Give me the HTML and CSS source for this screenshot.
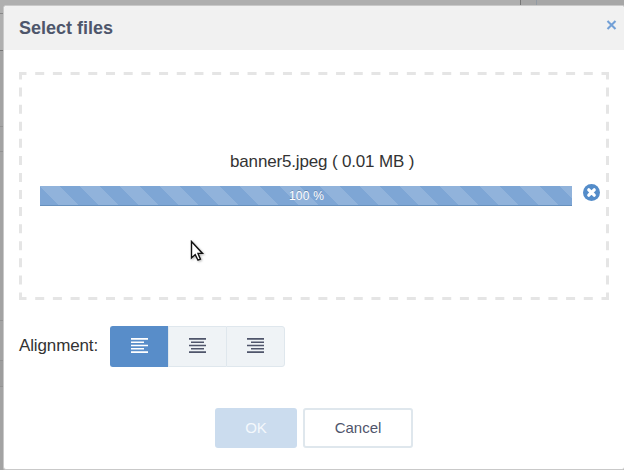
FILE: index.html
```html
<!DOCTYPE html>
<html lang="en">
<head>
<meta charset="utf-8">
<title>Select files</title>
<link rel="stylesheet" href="styles.css">
</head>
<body>
<div class="modal">
  <header class="modal-header">
    <h1>Select files</h1>
    <svg class="close" width="11" height="10" viewBox="0 0 11 10"><path d="M1.5 1 9.5 9M9.5 1 1.5 9"/></svg>
  </header>
  <main class="modal-body">
    <section class="dropzone">
      <svg class="dashes" width="590" height="228" viewBox="0 0 590 228">
        <g stroke-dasharray="9 8.697" stroke-dashoffset="4.5"><path d="M3 1.5H587"/><path d="M3 226.5H587"/></g>
        <g stroke-dasharray="9 8.077" stroke-dashoffset="4.5"><path d="M1.5 3V225"/><path d="M588.5 3V225"/></g>
        <path d="M0 1.5H3M587 1.5H590M0 226.5H3M587 226.5H590"/>
      </svg>
      <p class="filename">banner5.jpeg ( 0.01 MB )</p>
      <div class="upload">
        <div class="progress"><span>100 %</span></div>
        <svg class="remove" width="17" height="17" viewBox="0 0 17 17"><circle cx="8.5" cy="8.5" r="8.5"/><path d="M5.8 5.8 11.2 11.2M11.2 5.8 5.8 11.2"/></svg>
      </div>
    </section>
    <div class="alignment">
      <span class="label">Alignment:</span>
      <div class="group">
        <button class="active" aria-label="Left"><svg width="17" height="15" viewBox="0 0 17 15"><path d="M0 .9H17M0 4.2H13M0 7.5H17M0 10.8H13M0 14.1H17"/></svg></button>
        <button aria-label="Center"><svg width="17" height="15" viewBox="0 0 17 15"><path d="M0 .9H17M2 4.2H15M0 7.5H17M2 10.8H15M0 14.1H17"/></svg></button>
        <button aria-label="Right"><svg width="17" height="15" viewBox="0 0 17 15"><path d="M0 .9H17M4 4.2H17M0 7.5H17M4 10.8H17M0 14.1H17"/></svg></button>
      </div>
    </div>
  </main>
  <footer class="modal-footer">
    <button class="ok">OK</button>
    <button class="cancel">Cancel</button>
  </footer>
</div>
<svg class="cursor" width="16" height="24" viewBox="0 0 16 24"><path d="M1.5 1.5V18L5.2 14.6 8 20.2 10.4 19.2 8 13.4H12.5Z"/></svg>
</body>
</html>
```
FILE: styles.css
```css
* { box-sizing: border-box; }
body {
  margin: 0;
  width: 624px;
  height: 470px;
  padding: 5px 0 0 3px;
  overflow: hidden;
  font-family: "Liberation Sans", Arial, sans-serif;
  color: #333;
  background:
    linear-gradient(#777, #777) 520px 0 / 1px 5px no-repeat,
    linear-gradient(#929ba4, #929ba4) 536px 0 / 1px 5px no-repeat,
    linear-gradient(#a7a7a7, #a7a7a7) 521px 0 / 103px 5px no-repeat,
    linear-gradient(#888, #888) 0 13px / 3px 1px no-repeat,
    linear-gradient(#777, #777) 0 50px / 3px 1px no-repeat,
    linear-gradient(#929292, #929292) 0 126px / 3px 1px no-repeat,
    linear-gradient(#929292, #929292) 0 151px / 3px 1px no-repeat,
    linear-gradient(#929292, #929292) 0 320px / 3px 1px no-repeat,
    linear-gradient(#929292, #929292) 0 360px / 3px 1px no-repeat,
    linear-gradient(#929292, #929292) 0 386px / 3px 1px no-repeat,
    linear-gradient(#9d9d9d, #9d9d9d) 0 361px / 3px 25px no-repeat,
    linear-gradient(#a3a3a3, #a3a3a3) 0 51px / 3px 419px no-repeat,
    #afafaf;
}
.modal {
  width: 622px;
  height: 465px;
  border: 1px solid #c9c9c9;
  border-radius: 3px;
  background: #fff;
  display: flex;
  flex-direction: column;
}
.modal-header {
  height: 44px;
  padding: 0 7px 0 15px;
  display: flex;
  justify-content: space-between;
  align-items: center;
  background: #f1f1f1;
  border-radius: 3px 3px 0 0;
}
h1 { margin: 0; font-size: 18px; line-height: 44px; color: #4e566b; }
.close { margin-top: -6px; fill: none; stroke: #73a0d6; stroke-width: 2.1; }
.modal-body { padding: 22px 14px 0 15px; }
.dropzone { position: relative; width: 590px; height: 228px; padding: 79px 0 0 21px; }
.dashes { position: absolute; inset: 0; fill: none; stroke: #e5e5e5; stroke-width: 3; }
.filename { margin: 0; padding-left: 190px; font-size: 17px; line-height: 21px; letter-spacing: -.16px; white-space: nowrap; }
.upload { display: flex; gap: 11px; margin-top: 12px; }
.progress {
  margin-top: 2px;
  width: 532px;
  height: 20px;
  background: linear-gradient(45deg, rgba(255,255,255,.15) 25%, transparent 25%, transparent 50%, rgba(255,255,255,.15) 50%, rgba(255,255,255,.15) 75%, transparent 75%) 0 0 / 40px 40px, #7ea6d5;
  box-shadow: inset 0 -1px 0 #6690bd;
  color: #fff;
  font-size: 12px;
  line-height: 20px;
  letter-spacing: .2px;
  padding-left: 1px;
  text-align: center;
  text-shadow: 0 -1px 0 rgba(0,0,0,.2);
}
.remove { fill: #548cc9; }
.remove path { stroke: #fff; stroke-width: 3.3; stroke-linecap: round; }
.alignment { display: flex; align-items: center; margin-top: 26px; height: 41px; }
.label { width: 91px; font-size: 17px; letter-spacing: -.13px; padding-bottom: 2px; }
button { margin: 0; padding: 0; font: 15px "Liberation Sans", Arial, sans-serif; }
.group { display: flex; width: 175px; height: 41px; }
.group button {
  width: 58px;
  display: flex;
  align-items: center;
  justify-content: center;
  border: 1px solid #dfe7ed;
  border-right: 0;
  background: #eff3f6;
}
.group button:first-child { border-color: #588dc9; border-radius: 3px 0 0 3px; }
.group button:last-child { width: 59px; border-right: 1px solid #dfe7ed; border-radius: 0 3px 3px 0; }
.group .active { background: #588dc9; }
.group svg { stroke: #4f556b; stroke-width: 1.6; margin-top: -2px; }
.group .active svg { stroke: #fff; }
.modal-footer { display: flex; gap: 6px; padding: 41px 0 0 211px; }
.ok { width: 82px; height: 40px; padding-bottom: 2px; border: 0; border-radius: 3px; background: #cbdcee; color: #f4f8fc; }
.cancel { width: 110px; height: 40px; padding-bottom: 2px; border: 2px solid #dfe7ed; border-radius: 3px; background: #fff; color: #4f556b; }
.cursor { position: absolute; left: 190px; top: 240px; fill: #fff; stroke: #111; stroke-width: 1.4; filter: drop-shadow(1px 1px 1px rgba(0,0,0,.3)); }
```
